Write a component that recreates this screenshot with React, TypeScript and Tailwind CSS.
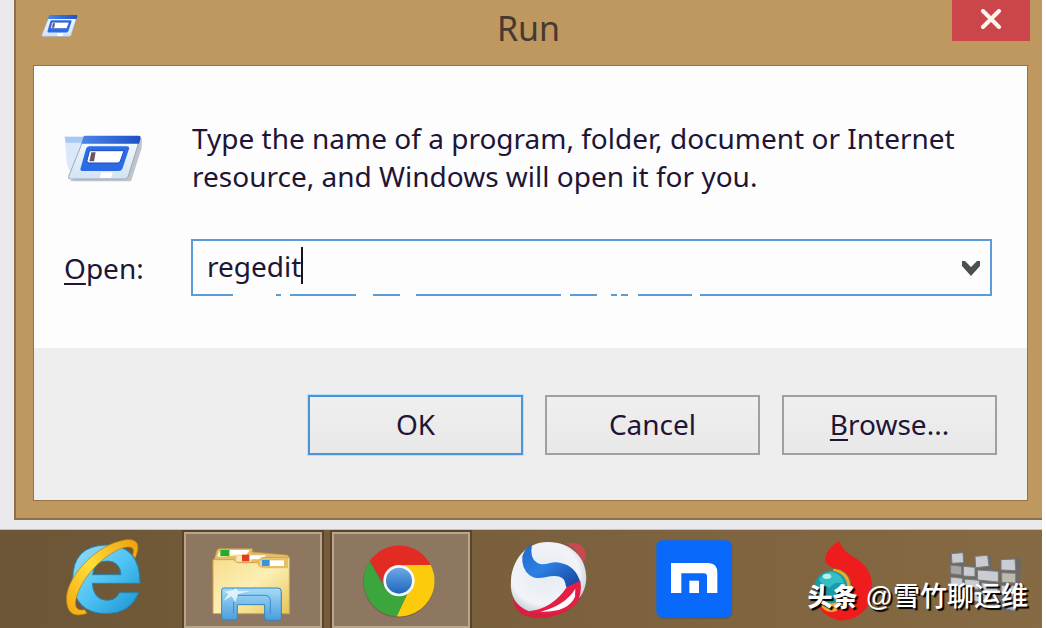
import React, { useState } from 'react';

const RunIcon: React.FC<{ className?: string; trail?: boolean }> = ({ className, trail }) => (
  <svg className={className} viewBox={trail ? '0 0 240 150' : '10 0 224 150'} aria-hidden="true">
    <defs>
      <linearGradient id="runBar" x1="0" x2="1">
        <stop offset="0" stopColor="#4a86e6" />
        <stop offset="1" stopColor="#1d50c8" />
      </linearGradient>
      <linearGradient id="runSheet" x1="0" y1="0" x2="0" y2="1">
        <stop offset="0" stopColor="#f6fbff" />
        <stop offset="1" stopColor="#d3e3f3" />
      </linearGradient>
    </defs>
    {trail && (
      <>
        <path d="M2 8h60L20 112q-9-6-12-30z" fill="#dbe7fb" />
        <path d="M2 8h58l-8 18H5z" fill="#a9c8f5" />
        <path d="M17 142h184l32-100 1-30-12 18z" fill="#8d939f" opacity=".55" />
      </>
    )}
    <path d="M62 8h160q6 0 5 8l-34 110q-3 9-12 9H19q-7 0-5-8z" fill="url(#runSheet)" stroke="#9aa9be" strokeWidth="3" />
    <path d="M62 5h162q7 0 6 9l-5 15H52l5-17q2-7 5-7z" fill="url(#runBar)" />
    <path d="M76 37h113q8 0 6 8l-19 57q-3 9-12 9H55q-8 0-5-9l16-57q2-8 10-8z" fill="#2c6be6" />
    <path d="M80 50h100l-11 31q-2 6-9 6H76q-9 0-7-8l6-23q1-6 5-6z" fill="#fff" stroke="#1a4dbd" strokeWidth="3" />
    <path d="M82 55h13l-5 27H76z" fill="#6b5662" />
    <path d="M112 115h34l-5 17h-34z" fill="#fff" />
  </svg>
);

const InternetExplorer = () => (
  <svg className="h-[98px] w-full" viewBox="-12 0 414 294" aria-hidden="true">
    <defs>
      <linearGradient id="ieBlue" x1="0" y1="0" x2="1" y2="1">
        <stop offset="0" stopColor="#9adcf3" />
        <stop offset=".5" stopColor="#4fc3f3" />
        <stop offset="1" stopColor="#1791d0" />
      </linearGradient>
      <linearGradient id="ieGold" x1="0" y1="1" x2="1" y2="0">
        <stop offset="0" stopColor="#f2a80c" />
        <stop offset=".5" stopColor="#ffdc3c" />
        <stop offset="1" stopColor="#ef9f0c" />
      </linearGradient>
    </defs>
    <path
      d="M300 160Q300 45 199 45Q98 47 98 148Q100 251 200 251Q272 250 296 188H238Q229 211 199 211Q160 208 157 160ZM158 134Q163 93 202 93Q240 94 243 134Z"
      fill="url(#ieBlue)"
      fillRule="evenodd"
      stroke="#2384ad"
      strokeWidth="3"
    />
    <path
      d="M285 85C307 37 287 19 237 34C160 54 72 149 80 216C83 250 103 263 141 250L134 239C111 244 103 231 108 208C121 148 184 78 245 55C275 45 286 54 278 75Z"
      fill="url(#ieGold)"
      stroke="#b47d10"
      strokeWidth="2"
    />
  </svg>
);

const Explorer = () => (
  <svg className="h-[98px] w-full" viewBox="432 0 414 294" aria-hidden="true">
    <defs>
      <linearGradient id="folder" x1="0" y1="0" x2="1" y2="1">
        <stop offset="0" stopColor="#f7dc8d" />
        <stop offset=".5" stopColor="#fcefb4" />
        <stop offset="1" stopColor="#e8c556" />
      </linearGradient>
      <linearGradient id="stand" x1="0" y1="0" x2="0" y2="1">
        <stop offset="0" stopColor="#a5dcf7" />
        <stop offset="1" stopColor="#4b9cdc" />
      </linearGradient>
    </defs>
    <path d="M519 101l12-40q2-5 8-5h96q6 3 0 10l104 9q8 1 8 9v35H519z" fill="#e3bd67" stroke="#c69b46" strokeWidth="2" />
    <path d="M532 80l6-18h90l-10 13z" fill="#fff4cf" />
    <path d="M570 60h58l-8 12h-50z" fill="#fff" />
    <path d="M541 60h27v18h-27z" fill="#22ac2c" />
    <path d="M590 78h50l-8 17h-45z" fill="#f6e6b8" />
    <path d="M628 76h50l-12 12h-38z" fill="#fff" />
    <path d="M606 74h22v20h-22z" fill="#e43a23" />
    <path d="M519 89h62l12 9h57l14-15h84v168H519z" fill="url(#folder)" stroke="#d0a346" strokeWidth="3" />
    <path d="M650 98l14-13h80v30h-75q-14-4-19-17z" fill="#e5be61" />
    <path d="M662 91h70v17h-70z" fill="#fff" />
    <path d="M665 90h24v18h-24z" fill="#3894df" />
    <path
      d="M550 174h164q10 0 10 10v80q0 7-8 7h-34q-8 0-8-8v-39h-82v39q0 7-8 7h-32q-7 0-7-8v-80q0-8 5-8z"
      fill="url(#stand)"
      stroke="#3484c0"
      strokeWidth="3"
    />
    <path d="M592 196h82q17 0 17 17v38M581 216v34" fill="none" stroke="#3a8bcc" strokeWidth="3" />
    <path d="M553 185l28-5 6-5 8 9 35-1-36 9-8 25-11-18-25 14 15-21z" fill="#fff" opacity=".7" />
  </svg>
);

const Chrome = () => (
  <svg className="h-[98px] w-full" viewBox="36 0 414 294" aria-hidden="true">
    <defs>
      <linearGradient id="chromeBlue" x1="0" y1="0" x2="0" y2="1">
        <stop offset="0" stopColor="#6fa8e6" />
        <stop offset="1" stopColor="#1d66bd" />
      </linearGradient>
    </defs>
    <circle cx="236" cy="156" r="107" fill="#463626" opacity=".3" />
    <path d="M149 94A106 106 0 0 1 332 105H236L188 153z" fill="#e22b22" />
    <path d="M332 105A106 106 0 0 1 230 259L281 152Q281 125 248 105z" fill="#fccb0b" />
    <path d="M149 94L192 172Q214 205 260 195L230 259A106 106 0 0 1 149 94z" fill="#3ba63b" />
    <circle cx="237" cy="152" r="47" fill="#f3f7fa" />
    <circle cx="237" cy="152" r="39" fill="url(#chromeBlue)" />
  </svg>
);

const Sogou = () => (
  <svg className="h-[98px] w-full" viewBox="480 0 414 294" aria-hidden="true">
    <defs>
      <radialGradient id="pearl" cx=".45" cy=".45" r=".6">
        <stop offset="0" stopColor="#e5ebf4" />
        <stop offset=".75" stopColor="#f1f3f7" />
        <stop offset="1" stopColor="#c6ced9" />
      </radialGradient>
      <linearGradient id="swirl" x1="0" y1="0" x2="1" y2="1">
        <stop offset="0" stopColor="#2267cb" />
        <stop offset=".45" stopColor="#2c80e3" />
        <stop offset="1" stopColor="#153f9c" />
      </linearGradient>
    </defs>
    <path d="M738 40Q785 32 796 65Q800 83 790 98Q772 59 738 40z" fill="#c94852" />
    <path d="M583 192Q573 232 606 253Q646 275 707 257Q765 241 792 183L780 155z" fill="#d91f3f" />
    <path d="M573 151C577 90 617 36 684 36C753 36 800 83 799 146Q797 174 785 194Q770 225 626 244Q567 220 573 151z" fill="url(#pearl)" />
    <path
      d="M607 79Q615 53 636 43Q628 86 652 99C675 111 693 91 722 99Q768 108 781 158L748 172Q738 178 736 160Q733 139 704 138C680 137 653 154 629 136Q604 117 607 79z"
      fill="url(#swirl)"
    />
    <path d="M741 170L781 152Q789 193 765 225Q713 265 626 244Q699 235 741 170z" fill="#e51e45" />
    <path d="M766 176Q736 226 661 245Q745 247 765 200z" fill="#fff" />
  </svg>
);

const Maxthon = () => (
  <svg className="h-[98px] w-full" viewBox="-6 0 414 294" aria-hidden="true">
    <rect x="81" y="34" width="226" height="233" rx="20" fill="#514d50" opacity=".5" />
    <rect x="79" y="31" width="227" height="231" rx="18" fill="#0869fb" />
    <path d="M123 99H235Q262 100 262 128V189H231V139Q231 130 222 130H154V189H123z" fill="#fff" />
    <path d="M178 152h29v37h-29z" fill="#fff" />
  </svg>
);

const Flame = () => (
  <svg className="h-[98px] w-full" viewBox="438 0 414 294" aria-hidden="true">
    <path
      d="M627 32Q583 62 586 91Q589 112 633 119Q665 132 664 165Q650 198 560 208Q567 258 632 272Q697 267 717 219Q737 160 713 120Q700 98 675 83Q638 65 627 32z"
      fill="#ee1c1c"
    />
    <path d="M611 116Q656 121 661 166Q664 219 618 244Q584 253 568 219z" fill="#f5a827" />
    <circle cx="603" cy="171" r="49" fill="#1a9ba9" />
    <path d="M567 150Q579 126 606 125Q636 132 644 161Q612 151 599 174Q580 169 567 150z" fill="#31bfc5" />
    <ellipse cx="591" cy="139" rx="13" ry="8" fill="#b8f0eb" />
  </svg>
);

const Wall = () => (
  <svg className="h-[98px] w-full" viewBox="882 0 354 294" aria-hidden="true">
    <path d="M960 68l42-5 5 43 27 1v-31l48-1 3 40 26 3V87l62-3-4 144-35 20-60-28-112-29z" fill="#6d6964" />
    <g fill="#c9cdd2" stroke="#7c7b7b" strokeWidth="3">
      <path d="M964 71l35-3 2 30-35 2z" />
      <path d="M1035 79l38-3 4 33-40 4z" />
      <path d="M1113 89l42-2 2 35-44-2z" />
      <path d="M1000 109l35 3v28l-35-2z" />
      <path d="M1042 120l63 4v32l-62-6z" />
      <path d="M962 105l33 4v26l-33-4z" fill="#a6a6a5" />
      <path d="M962 141l36 4v26l-36-3z" />
      <path d="M1004 147l44 4v28l-44-6z" />
      <path d="M1115 128l42 2v29l-42-2z" fill="#bdb9ad" />
      <path d="M1055 158l49 5v31l-49-8z" />
      <path d="M964 177l51 5v27l-51-10z" />
      <path d="M1022 184l50 8v29l-50-10z" />
      <path d="M1113 166l44 1v32l-44-2z" />
      <path d="M1115 206l51 2-9 35-33-7z" fill="#b0b7be" />
    </g>
  </svg>
);

const taskbarItems = [
  { name: 'Internet Explorer', Icon: InternetExplorer, open: false },
  { name: 'File Explorer', Icon: Explorer, open: true },
  { name: 'Chrome', Icon: Chrome, open: true },
  { name: 'Sogou', Icon: Sogou, open: false },
  { name: 'Maxthon', Icon: Maxthon, open: false },
  { name: 'Torch', Icon: Flame, open: false },
];

const buttonBase = 'h-[60px] w-[215px] border-2 bg-gradient-to-b from-[#f0eff0] to-[#e8e8e9] pb-[2px]';

const App: React.FC = () => {
  const [command, setCommand] = useState('regedit');

  return (
    <div className="min-h-screen bg-white pr-1 font-['Noto_Sans','Open_Sans',sans-serif] text-[28px] leading-[38px] text-[#211536]">
      <div className="flex min-h-screen flex-col bg-[#e9e9ee]">
        <main className="ml-[14px] border-2 border-t-0 border-r-0 border-[#8f7149] bg-[#be985f] pr-[14px] pb-[17px] pl-[17px]">
          <header className="-mr-[2px] flex h-[65px] items-start">
            <div className="flex flex-1 pt-[14px] pl-2">
              <RunIcon className="h-[25px] w-[37px]" />
            </div>
            <h1 className="pt-1 text-[34px] leading-[48px] text-[#453a30]">Run</h1>
            <div className="flex flex-1 justify-end pl-[14px]">
              <button aria-label="Close" className="flex h-[41px] w-[78px] items-center justify-center bg-[#cb464b]">
                <svg className="mb-1 h-[20px] w-[22px]" viewBox="0 0 22 20">
                  <path d="M3 2l16 16M19 2L3 18" stroke="#fff5ee" strokeWidth="4" strokeLinecap="round" />
                </svg>
              </button>
            </div>
          </header>

          <section className="border border-[#967244] bg-[#eeeeef]">
            <div className="h-[282px] bg-[#fdfdfe] pt-[53px] pr-[35px] pl-[30px]">
              <div className="flex">
                <RunIcon className="mt-[14px] h-[52px] w-[80px]" trail />
                <p className="flex-1 pl-[48px]">
                  Type the name of a program, folder, document or Internet
                  <br />
                  resource, and Windows will open it for you.
                </p>
              </div>
              <div className="mt-[44px] flex items-center">
                <label htmlFor="open" className="w-[127px]">
                  <span className="underline underline-offset-4">O</span>pen:
                </label>
                <div className="relative flex h-[57px] flex-1 items-center border-2 border-[#5b9bd8] pr-[9px] pl-[14px]">
                  <input
                    id="open"
                    value={command}
                    onChange={(e) => setCommand(e.target.value)}
                    className="field-sizing-content bg-transparent pb-1 outline-none"
                  />
                  <span className="mb-1 h-[37px] w-[2px] bg-[#17121f]" />
                  <button aria-label="Show history" className="ml-auto">
                    <svg className="h-[16px] w-[20px]" viewBox="0 0 20 16">
                      <path d="M1 1l3 0 6 6 6-6 3 0v5l-9 10-9-10z" fill="#4b4f4f" />
                    </svg>
                  </button>
                  {/* worn spots in the lower border */}
                  <svg className="pointer-events-none absolute -bottom-[3px] -left-[2px] h-[4px] w-[510px]" viewBox="0 0 510 4">
                    <path
                      d="M42 2h43M90 2h9M165 2h17M209 2h16M370 2h9M406 2h14M426 2h4M437 2h10M501 2h8"
                      stroke="#fdfdfe"
                      strokeWidth="4"
                    />
                  </svg>
                </div>
              </div>
            </div>
            <footer className="flex h-[152px] items-start justify-end gap-[22px] pt-[47px] pr-[30px]">
              <button className={`${buttonBase} border-[#4a94dc] ring-1 ring-[#b8e4fb]`}>OK</button>
              <button className={`${buttonBase} border-[#a0a0a2]`}>Cancel</button>
              <button className={`${buttonBase} border-[#a0a0a2]`}>
                <span className="underline underline-offset-4">B</span>rowse...
              </button>
            </footer>
          </section>
        </main>

        <nav className="relative mt-auto flex gap-[10px] overflow-hidden bg-gradient-to-r from-[#6c5637] via-[#7a603d] to-[#866a43] pl-[36px] shadow-[0_-1px_0_#c4c0bd]">
          {taskbarItems.map(({ name, Icon, open }) => (
            <button
              key={name}
              aria-label={name}
              className={
                open
                  ? 'w-[138px] border-t-2 border-[#5a4329] bg-[#8d7761] shadow-[inset_0_0_0_2px_#b8a58b,0_0_0_2px_#5a4329]'
                  : 'w-[138px]'
              }
            >
              <span className={open ? '-mt-[2px] block' : 'block'}>
                <Icon />
              </span>
            </button>
          ))}
          <button aria-label="Wall" className="min-w-0 flex-1">
            <Wall />
          </button>
          <div className="pointer-events-none absolute right-[14px] bottom-[12px] flex items-center gap-2 font-['Liberation_Sans','Noto_Sans_CJK_SC',sans-serif] text-[27px] font-medium text-white [text-shadow:2px_2px_1px_#000]">
            <span className="text-[25px] font-black">头条</span>
            <span>@雪竹聊运维</span>
          </div>
        </nav>
      </div>
    </div>
  );
};

export default App;
